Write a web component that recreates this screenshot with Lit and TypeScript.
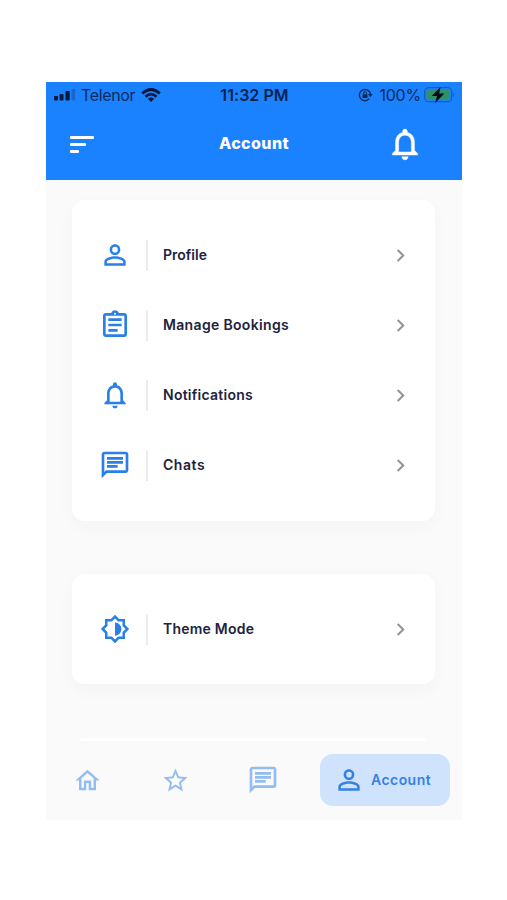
import { LitElement, html, css, svg } from "lit";
import { customElement, property } from "lit/decorators.js";

const ICONS: Record<string, string> = {
  person:
    "M12 5.9a2.1 2.1 0 1 1 0 4.2 2.1 2.1 0 0 1 0-4.2m0 9c2.97 0 6.1 1.46 6.1 2.1v1.1H5.9V17c0-.64 3.13-2.1 6.1-2.1M12 4C9.79 4 8 5.79 8 8s1.79 4 4 4 4-1.79 4-4-1.79-4-4-4zm0 9c-2.67 0-8 1.34-8 4v3h16v-3c0-2.66-5.33-4-8-4z",
  clipboard:
    "M7 15h7v2H7zm0-4h10v2H7zm0-4h10v2H7zM19 3h-4.18C14.4 1.84 13.3 1 12 1s-2.4.84-2.82 2H5c-1.1 0-2 .9-2 2v14c0 1.1.9 2 2 2h14c1.1 0 2-.9 2-2V5c0-1.1-.9-2-2-2zm-7-.25a.75.75 0 1 1 0 1.5.75.75 0 0 1 0-1.5zM19 19H5V5h14v14z",
  bell:
    "M12 22c1.1 0 2-.9 2-2h-4c0 1.1.9 2 2 2zm6-6v-5c0-3.07-1.63-5.64-4.5-6.32V4c0-.83-.67-1.5-1.5-1.5s-1.5.67-1.5 1.5v.68C7.64 5.36 6 7.92 6 11v5l-2 2v1h16v-1l-2-2zm-2 1H8v-6c0-2.48 1.51-4.5 4-4.5s4 2.02 4 4.5v6z",
  chat:
    "M4 4h16v12H5.17L4 17.17V4m0-2c-1.1 0-1.99.9-1.99 2L2 22l4-4h14c1.1 0 2-.9 2-2V4c0-1.1-.9-2-2-2H4zm2 10h8v2H6v-2zm0-3h12v2H6V9zm0-3h12v2H6V6z",
  brightness:
    "M20 8.69V4h-4.69L12 .69 8.69 4H4v4.69L.69 12 4 15.31V20h4.69L12 23.31 15.31 20H20v-4.69L23.31 12 20 8.69zm-2 5.79V18h-3.52L12 20.48 9.52 18H6v-3.52L3.52 12 6 9.52V6h3.52L12 3.52 14.48 6H18v3.52L20.48 12 18 14.48zM12 6.7v10.6c2.9 0 5.1-2.4 5.1-5.3S14.9 6.7 12 6.7z",
  home:
    "M12 5.69l5 4.5V18h-2v-6H9v6H7v-7.81l5-4.5M12 3L2 12h3v8h6v-6h2v6h6v-8h3L12 3z",
  star:
    "M22 9.24l-7.19-.62L12 2 9.19 8.63 2 9.24l5.46 4.73L5.82 21 12 17.27 18.18 21l-1.63-7.03L22 9.24zM12 15.4l-3.76 2.27 1-4.28-3.32-2.88 4.38-.38L12 6.1l1.71 4.04 4.38.38-3.32 2.88 1 4.28L12 15.4z",
  chevron: "M10 6L8.59 7.41 13.17 12l-4.58 4.59L10 18l6-6z",
};

@customElement("app-icon")
class AppIcon extends LitElement {
  @property() name = "person";
  @property({ type: Number }) size = 32;
  static styles = css`
    :host { display: block; flex: none; }
    svg { display: block; fill: currentColor; stroke: currentColor; stroke-width: var(--icon-stroke, 0); }
  `;
  render() {
    return html`<svg width=${this.size} height=${this.size} viewBox="0 0 24 24">
      ${svg`<path d=${ICONS[this.name]} />`}
    </svg>`;
  }
}

@customElement("menu-row")
class MenuRow extends LitElement {
  @property() icon = "person";
  @property() label = "";
  @property({ type: Number }) size = 32;
  @property({ type: Number }) tracking = 0;
  static styles = css`
    :host { display: flex; align-items: center; height: 70px; padding: 0 22px 0 27px; }
    .slot { width: 32px; display: flex; justify-content: center; color: #2a80e6; }
    .rule { width: 2px; height: 31px; margin-left: 15px; background: #ececee; }
    .label { flex: 1; margin-left: 15px; padding-bottom: 2px; font-weight: 600; font-size: 14px; color: #22223f; white-space: nowrap; }
    .arrow { color: #939598; }
  `;
  render() {
    return html`
      <div class="slot"><app-icon name=${this.icon} .size=${this.size}></app-icon></div>
      <div class="rule"></div>
      <div class="label" style="letter-spacing:${this.tracking}px">${this.label}</div>
      <app-icon class="arrow" name="chevron" .size=${25}></app-icon>
    `;
  }
}

@customElement("app-root")
class AppRoot extends LitElement {
  static styles = css`
    :host {
      display: block; box-sizing: border-box; height: 900px; padding: 82px 45px 80px 46px;
      background: #fff; font-family: Inter, "Open Sans", sans-serif;
    }
    .phone { height: 738px; background: #fafafa; display: flex; flex-direction: column; overflow: hidden; }
    header { height: 98px; flex: none; background: #1b82ff; color: #fff; }
    .status {
      height: 26px; display: grid; grid-template-columns: 1fr auto 1fr; align-items: center;
      padding: 0 7px 0 8px; color: #0b2a5c; font-size: 16px;
    }
    .left, .right { display: flex; align-items: center; }
    .right { justify-content: flex-end; }
    .carrier { margin: 0 6px 0 5px; letter-spacing: -0.35px; }
    .clock { font-weight: 600; color: #08224d; letter-spacing: 0.05px; }
    .percent { margin: 0 3px 0 6px; letter-spacing: -0.2px; }
    svg { display: block; flex: none; }
    .bar { height: 72px; display: grid; grid-template-columns: 1fr auto 1fr; align-items: center; padding: 0 24px; }
    .title { font-size: 16px; font-weight: 800; padding-bottom: 2px; letter-spacing: 0.4px; }
    .lines { display: grid; gap: 4px; }
    .lines i { height: 3px; background: #fff; border-radius: 1px; }
    .l1 { width: 24px; } .l2 { width: 16px; } .l3 { width: 9px; }
    .alert { justify-self: end; margin-right: 14px; --icon-stroke: 0.25; }
    main { flex: 1; min-height: 0; overflow: hidden; padding: 20px 27px 0 26px; }
    .card {
      background: #fff; border-radius: 13px; padding: 20px 0 21px;
      box-shadow: 0 6px 18px rgba(30, 50, 70, 0.03);
    }
    .card + .card { margin-top: 53px; padding: 20px 0; }
    .next { height: 3px; margin: 54px 8px 0; background: #fff; border-radius: 3px 3px 0 0; }
    nav {
      height: 79px; box-sizing: border-box; flex: none; display: flex; align-items: center;
      color: #93bcef; padding: 0 12px 1px 27px;
    }
    .tab { width: 88px; flex: none; }
    .tab app-icon { width: max-content; }
    .tab.mid { width: 86px; }
    .tab.last { width: 32px; }
    .pill {
      margin-left: auto; flex: none; width: 130px; height: 52px; display: flex; align-items: center; gap: 6px;
      padding-left: 13px; box-sizing: border-box; border-radius: 13px; background: #cfe3fd;
      color: #3680e3; font-size: 14px; font-weight: 600; letter-spacing: 0.45px;
    }
    .pill span { padding-bottom: 1px; }
  `;

  render() {
    return html`
      <div class="phone">
        <header>
          <div class="status">
            <div class="left">
              <svg width="22" height="12" viewBox="0 0 22 12">
                <g fill="#07183a">
                  <rect x="0" y="7" width="4" height="4.5" rx="1" />
                  <rect x="5.5" y="5" width="4" height="6.5" rx="1" />
                  <rect x="11.5" y="2" width="4.2" height="9.5" rx="1" />
                </g>
                <rect x="17.5" y="0" width="3.7" height="11.5" rx="1" fill="#1867cb" />
              </svg>
              <span class="carrier">Telenor</span>
              <svg width="20" height="14" viewBox="0 0 20 14" fill="none" stroke="#07183a" stroke-width="2.7">
                <path d="M1.2 5.4Q10-2.4 18.8 5.4M4.5 8.8Q10 3.6 15.5 8.8" />
                <path d="M10 14L6.8 10.8Q10 8.2 13.2 10.8Z" fill="#07183a" stroke="none" />
              </svg>
            </div>
            <span class="clock">11:32 PM</span>
            <div class="right">
              <svg width="15" height="14" viewBox="0 0 15 14" fill="none" stroke="#0b2a5c" stroke-width="1.4">
                <path d="M11.2 10.8A5.6 5.6 0 1 1 12.5 6.2" />
                <path d="M9.9 6h4.8l-2.3 3.2z" fill="#0b2a5c" stroke="none" />
                <rect x="4.5" y="6.2" width="5" height="3.8" rx=".6" fill="#0b2a5c" stroke="none" />
                <path d="M5.5 6.5V5.2a1.5 1.5 0 0 1 3 0v1.3" stroke-width="1.1" />
              </svg>
              <span class="percent">100%</span>
              <svg width="31" height="18" viewBox="0 0 31 18">
                <rect x=".7" y="1.7" width="27" height="14" rx="4" fill="none" stroke="#175fb6" stroke-width="1.3" />
                <rect x="2.5" y="3.5" width="23.4" height="10.4" rx="2.4" fill="#2f9168" />
                <path d="M29 6.2q2 2.5 0 5z" fill="#175fb6" />
                <path d="M16.6.8L7.8 9.9h5.2L11 17.2 20.4 7.5h-5.2z" fill="#040d1d" />
              </svg>
            </div>
          </div>
          <div class="bar">
            <div class="lines"><i class="l1"></i><i class="l2"></i><i class="l3"></i></div>
            <div class="title">Account</div>
            <app-icon class="alert" name="bell" .size=${38}></app-icon>
          </div>
        </header>
        <main>
          <section class="card">
            <menu-row icon="person" label="Profile"></menu-row>
            <menu-row icon="clipboard" label="Manage Bookings" .tracking=${0.33}></menu-row>
            <menu-row icon="bell" label="Notifications" .tracking=${0.25}></menu-row>
            <menu-row icon="chat" label="Chats" .tracking=${0.55}></menu-row>
          </section>
          <section class="card">
            <menu-row icon="brightness" label="Theme Mode" .size=${30} .tracking=${0.22}></menu-row>
          </section>
          <div class="next"></div>
        </main>
        <nav>
          <div class="tab"><app-icon name="home" .size=${29}></app-icon></div>
          <div class="tab mid"><app-icon name="star" .size=${29}></app-icon></div>
          <div class="tab last"><app-icon name="chat" .size=${32}></app-icon></div>
          <div class="pill"><app-icon name="person" .size=${32}></app-icon><span>Account</span></div>
        </nav>
      </div>
    `;
  }
}
